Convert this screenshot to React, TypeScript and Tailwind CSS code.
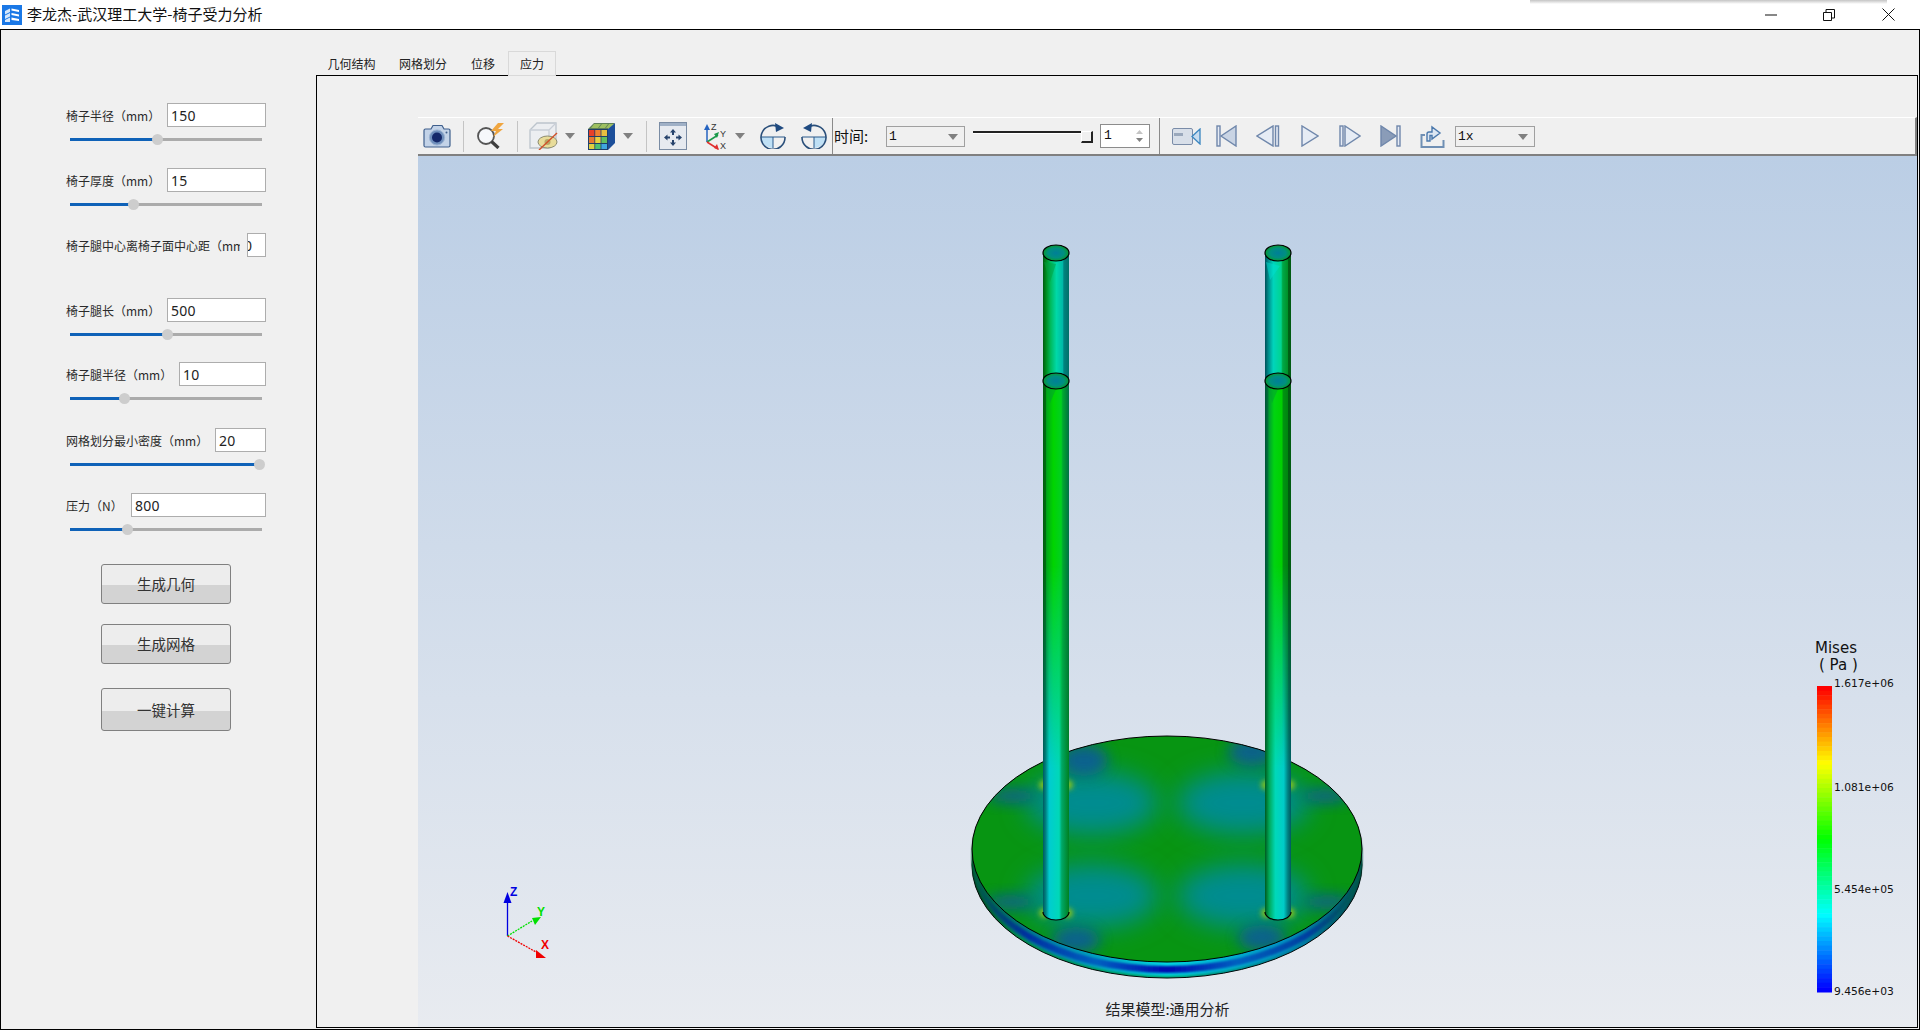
import React from "react";

const fields = [
  { label: "椅子半径（mm）", value: "150", inputW: "w-[99px]", fill: 87, h: "h-[65px]" },
  { label: "椅子厚度（mm）", value: "15", inputW: "w-[99px]", fill: 63, h: "h-[65px]" },
  { label: "椅子腿中心离椅子面中心距（mm）", value: "", inputW: "w-[19px]", fill: -1, h: "h-[65px]" },
  { label: "椅子腿长（mm）", value: "500", inputW: "w-[99px]", fill: 97, h: "h-[64px]" },
  { label: "椅子腿半径（mm）", value: "10", inputW: "w-[87px]", fill: 54, h: "h-[66px]" },
  { label: "网格划分最小密度（mm）", value: "20", inputW: "w-[51px]", fill: 189, h: "h-[65px]" },
  { label: "压力（N）", value: "800", inputW: "w-[135px]", fill: 57, h: "h-[65px]" },
];

const Caret = ({ className = "" }: { className?: string }) => (
  <svg width="10" height="6" viewBox="0 0 10 6" className={`shrink-0 ${className}`}>
    <path d="M0 0H10L5 6Z" fill="#808080" />
  </svg>
);

const Sep = ({ className = "" }: { className?: string }) => (
  <div className={`w-px h-[31px] bg-[#c4c4c4] shrink-0 ${className}`} />
);

const Combo = ({ value, className = "" }: { value: string; className?: string }) => (
  <div className={`h-[21px] mt-[1px] border border-[#a0a0a0] flex items-center justify-between pl-[2px] pr-[6px] shrink-0 font-['Liberation_Mono',monospace] text-[13px] text-[#111] ${className}`}>
    <span>{value}</span>
    <Caret />
  </div>
);

const Field = ({ f }: { f: (typeof fields)[number] }) => (
  <div className={f.h}>
    <div className="flex items-center justify-between h-6">
      <div className="flex-1 min-w-0 overflow-hidden whitespace-nowrap pt-px text-[12px] text-[#2a2a2a] mr-[7px]">{f.label}</div>
      <div className={`${f.inputW} h-6 shrink-0 bg-white border border-[#adadad] pl-[3px] flex items-center overflow-hidden font-['Noto_Sans',sans-serif] text-[14px] tracking-[0.3px] text-[#222]`}>
        {f.value || <span className="-ml-[7px]">0</span>}
      </div>
    </div>
    {f.fill >= 0 && (
      <div className="relative ml-[4px] mt-[11px] w-[192px] h-[3px] bg-[#ababab]">
        <div className="h-full bg-[#0f62b8]" style={{ width: f.fill }} />
        <div className="absolute top-[-4px] w-[11px] h-[11px] rounded-full bg-[#cdcdcd]" style={{ left: f.fill - 5 }} />
      </div>
    )}
  </div>
);

const CameraIcon = () => (
  <svg width="28" height="24" viewBox="0 0 28 24" className="ml-[5px] shrink-0">
    <path d="M1 6.5Q1 5 2.5 5H8L10 1.5H19L21 5H25.5Q27 5 27 6.5V21.5Q27 23 25.5 23H2.5Q1 23 1 21.5Z" fill="#c3d3e8" stroke="#3f5f8c" strokeWidth="1.2" />
    <circle cx="14" cy="13.5" r="7.6" fill="#6f8fbc" stroke="#9db4d3" />
    <circle cx="14" cy="13.5" r="5" fill="#14286a" />
    <circle cx="23.5" cy="8.5" r="1" fill="#3f5f8c" />
  </svg>
);

const SearchBoltIcon = () => (
  <svg width="29" height="26" viewBox="0 0 29 26" className="ml-[12px] shrink-0">
    <circle cx="10" cy="13" r="8" fill="#f6f8fb" stroke="#555" strokeWidth="1.8" />
    <path d="M15.5 18.5L22.5 25" stroke="#3e3e3e" strokeWidth="3.2" />
    <path d="M22 0L15 8H20L17 14L27 6H22L28 0Z" fill="#f0a640" />
  </svg>
);

const HideCubeIcon = () => (
  <svg width="29" height="28" viewBox="0 0 29 28" className="ml-[11px] shrink-0">
    <path d="M1 8L8 1H27V19L20 26H1Z" fill="#eceef1" stroke="#bcc4cc" strokeWidth="1.3" />
    <path d="M1 8H20V26M20 8L27 1" fill="none" stroke="#c8ced6" strokeWidth="1.3" />
    <ellipse cx="18.5" cy="20" rx="9.5" ry="6" fill="#e8dc9a" stroke="#8c8c70" />
    <circle cx="18.5" cy="20" r="3" fill="#b8a868" />
    <path d="M10 28L28 11" stroke="#d0502a" strokeWidth="1.4" />
  </svg>
);

const ColorCubeIcon = () => (
  <svg width="27" height="27" viewBox="0 0 27 27" className="ml-[13px] shrink-0">
    <path d="M0 6L6 0H27L20 6Z" fill="#5f7f58" />
    <path d="M6 1H13L10 5H3ZM14 1H20L17 5H11ZM21 1H26L22 5H18Z" fill="#9ec060" />
    <path d="M20 6L27 0V20L20 27Z" fill="#1d4f9a" />
    <rect x="0" y="6" width="20" height="21" fill="#1f3f6a" />
    <rect x="1" y="7" width="5.4" height="6" fill="#e8402a" />
    <rect x="7.2" y="7" width="5.4" height="6" fill="#f08030" />
    <rect x="13.4" y="7" width="5.6" height="6" fill="#e8c040" />
    <rect x="1" y="14" width="5.4" height="6" fill="#e87830" />
    <rect x="7.2" y="14" width="5.4" height="6" fill="#e8d040" />
    <rect x="13.4" y="14" width="5.6" height="6" fill="#60c060" />
    <rect x="1" y="21" width="5.4" height="5" fill="#e0d040" />
    <rect x="7.2" y="21" width="5.4" height="5" fill="#50c070" />
    <rect x="13.4" y="21" width="5.6" height="5" fill="#40a8e0" />
  </svg>
);

const FitIcon = () => (
  <svg width="28" height="28" viewBox="0 0 28 28" className="ml-[12px] shrink-0">
    <rect x="0.5" y="0.5" width="27" height="27" fill="#e6eaf0" stroke="#7a8ca4" />
    <rect x="1" y="1" width="26" height="3" fill="#9fb0c6" />
    <path d="M14 7L11 10.5H13V13H15V10.5H17ZM14 24L11 20.5H13V18H15V20.5H17ZM5 15.5L8.5 12.5V14.5H11V16.5H8.5V18.5ZM23 15.5L19.5 12.5V14.5H17V16.5H19.5V18.5Z" fill="#26436c" />
  </svg>
);

const AxisIcon = () => (
  <svg width="23" height="29" viewBox="0 0 23 29" className="ml-[17px] shrink-0">
    <path d="M3 20V6" stroke="#2563c0" strokeWidth="1.5" />
    <path d="M3 2L0 8H6Z" fill="#2563c0" />
    <path d="M3 20L14 13" stroke="#1a9a4a" strokeWidth="1.5" />
    <path d="M15 10L10 12L13 16Z" fill="#1a9a4a" />
    <path d="M3 20L14 27" stroke="#e03030" strokeWidth="1.5" />
    <path d="M15 28L10 26L13 22Z" fill="#e03030" />
    <text x="7" y="8" fontSize="9" fontFamily="Liberation Sans" fill="#333">Z</text>
    <text x="16" y="15" fontSize="9" fontFamily="Liberation Sans" fill="#333">Y</text>
    <text x="16" y="27" fontSize="9" fontFamily="Liberation Sans" fill="#333">X</text>
  </svg>
);

const RotateIcon = ({ mirror = false, className = "" }: { mirror?: boolean; className?: string }) => (
  <svg width="26" height="26" viewBox="0 0 26 26" className={`shrink-0 ${mirror ? "-scale-x-100" : ""} ${className}`}>
    <path d="M1 14H13V25A12 12 0 0 1 1 14Z" fill="#bfe0f5" />
    <path d="M1 14H25M13 14V25" stroke="#2a5a8c" strokeWidth="1" />
    <path d="M19 4A12 12 0 1 0 25 14" fill="none" stroke="#2a4f7a" strokeWidth="1.6" />
    <path d="M15 0L24 5L16 9Z" fill="#1f4a80" />
  </svg>
);

const VideoIcon = () => (
  <svg width="29" height="17" viewBox="0 0 29 17" className="ml-[12px] shrink-0">
    <rect x="0.5" y="0.5" width="20" height="16" rx="1.5" fill="#d8dfe9" stroke="#7a8ca8" />
    <rect x="2" y="5" width="9" height="3" fill="#9aa8bc" />
    <path d="M20 8.5L28 1V16Z" fill="#c8dcef" stroke="#3a86c0" strokeWidth="1.3" />
  </svg>
);

const mediaProps = { fill: "#e6ecf5", stroke: "#6f87ab", strokeWidth: 1.4 };

const FirstIcon = () => (
  <svg width="21" height="22" viewBox="0 0 21 22" className="ml-[15px] shrink-0">
    <rect x="1" y="1" width="3" height="20" {...mediaProps} />
    <path d="M20 1V21L5 11Z" {...mediaProps} fill="#c9d4e4" />
  </svg>
);

const PrevIcon = () => (
  <svg width="24" height="22" viewBox="0 0 24 22" className="ml-[19px] shrink-0">
    <path d="M17 1V21L1 11Z" {...mediaProps} />
    <rect x="19.5" y="1" width="3" height="20" {...mediaProps} />
  </svg>
);

const PlayIcon = () => (
  <svg width="18" height="22" viewBox="0 0 18 22" className="ml-[21px] shrink-0">
    <path d="M1 1V21L17 11Z" {...mediaProps} />
  </svg>
);

const NextIcon = () => (
  <svg width="22" height="22" viewBox="0 0 22 22" className="ml-[20px] shrink-0">
    <rect x="1" y="1" width="3" height="20" {...mediaProps} />
    <path d="M6 1V21L21 11Z" {...mediaProps} />
  </svg>
);

const LastIcon = () => (
  <svg width="21" height="22" viewBox="0 0 21 22" className="ml-[19px] shrink-0">
    <path d="M1 1V21L16 11Z" {...mediaProps} fill="#8a9cb8" />
    <rect x="17" y="1" width="3" height="20" {...mediaProps} />
  </svg>
);

const ExportIcon = () => (
  <svg width="25" height="23" viewBox="0 0 25 23" className="ml-[19px] shrink-0">
    <path d="M5 10H1.5V22H23.5V15" fill="none" stroke="#6f8fb4" strokeWidth="2" />
    <path d="M7 16V9Q7 7 9 7H12V2L20 8L12 14V10.5H10V16Z" fill="#dce6f2" stroke="#4a78ac" strokeWidth="1.4" />
  </svg>
);

// bands of the colour bar, red at the top and blue at the bottom
const anchors = [
  [255, 0, 0],
  [255, 255, 0],
  [0, 255, 0],
  [0, 255, 255],
  [0, 0, 255],
];
const bandCount = 66;
const bands = Array.from({ length: bandCount }, (_, i) => {
  const t = (i / (bandCount - 1)) * 4;
  const a = Math.min(Math.floor(t), 3);
  const k = t - a;
  const c = anchors[a].map((v, j) => Math.round(v + (anchors[a + 1][j] - v) * k));
  return `rgb(${c[0]},${c[1]},${c[2]})`;
});

const legLabels = [
  { text: "1.617e+06", y: 687 },
  { text: "1.081e+06", y: 791 },
  { text: "5.454e+05", y: 893 },
  { text: "9.456e+03", y: 995 },
];

const blueSpots = [
  [1084, 760, 24, 16],
  [1252, 752, 24, 14],
  [1012, 796, 24, 7],
  [1326, 796, 24, 7],
  [1010, 902, 24, 7],
  [1328, 902, 24, 7],
  [1076, 940, 24, 13],
  [1262, 938, 24, 13],
];

const tealSpots = [
  [1092, 803],
  [1243, 803],
  [1092, 896],
  [1243, 896],
];

const Leg = ({ x, top, bottom, greenId, cyanId }: { x: number; top: number; bottom: number; greenId: string; cyanId: string }) => (
  <g>
    <rect x={x} y={top} width="26" height={bottom - top} fill={`url(#${greenId})`} />
    <rect x={x} y={top} width="26" height={bottom - top} fill={`url(#${cyanId})`} mask="url(#legFade)" />
    <path d={`M${x} ${bottom}A13 8 0 0 0 ${x + 26} ${bottom}`} fill={`url(#${cyanId})`} stroke="#000" strokeWidth="1.2" />
    <path d={`M${x + 3} ${top + 5}L${x + 14} ${top + 6}L${x + 7} ${top + 22}Z`} fill="#00a030" opacity="0.55" />
    <ellipse cx={x + 13} cy={top} rx="13" ry="8" fill="url(#legCap)" stroke="#000" strokeWidth="1.2" />
  </g>
);

const Model = () => (
  <svg viewBox="418 156 1499 871" className="absolute inset-0 w-full h-full">
    <defs>
      <linearGradient id="greenL">
        <stop offset="0" stopColor="#005c10" />
        <stop offset="0.1" stopColor="#006c10" />
        <stop offset="0.14" stopColor="#00a818" />
        <stop offset="0.4" stopColor="#00d400" />
        <stop offset="0.7" stopColor="#00d020" />
        <stop offset="0.76" stopColor="#00a830" />
        <stop offset="0.9" stopColor="#008838" />
        <stop offset="1" stopColor="#007048" />
      </linearGradient>
      <linearGradient id="greenR">
        <stop offset="0" stopColor="#005038" />
        <stop offset="0.1" stopColor="#007038" />
        <stop offset="0.16" stopColor="#00a030" />
        <stop offset="0.35" stopColor="#00d410" />
        <stop offset="0.65" stopColor="#00d000" />
        <stop offset="0.7" stopColor="#009410" />
        <stop offset="0.88" stopColor="#008410" />
        <stop offset="0.9" stopColor="#005c10" />
        <stop offset="1" stopColor="#005c10" />
      </linearGradient>
      <linearGradient id="cyanL">
        <stop offset="0" stopColor="#005a60" />
        <stop offset="0.1" stopColor="#008080" />
        <stop offset="0.24" stopColor="#00ccd0" />
        <stop offset="0.62" stopColor="#00d8b8" />
        <stop offset="0.72" stopColor="#00a868" />
        <stop offset="1" stopColor="#008020" />
      </linearGradient>
      <linearGradient id="cyanR">
        <stop offset="0" stopColor="#005a20" />
        <stop offset="0.16" stopColor="#00a858" />
        <stop offset="0.4" stopColor="#00d8b8" />
        <stop offset="0.72" stopColor="#00ccc8" />
        <stop offset="0.88" stopColor="#008080" />
        <stop offset="1" stopColor="#005a60" />
      </linearGradient>
      <linearGradient id="backL">
        <stop offset="0" stopColor="#005a10" />
        <stop offset="0.12" stopColor="#008c20" />
        <stop offset="0.28" stopColor="#00b858" />
        <stop offset="0.52" stopColor="#00d8a8" />
        <stop offset="0.76" stopColor="#00b8a8" />
        <stop offset="0.8" stopColor="#008480" />
        <stop offset="1" stopColor="#007068" />
      </linearGradient>
      <linearGradient id="backR">
        <stop offset="0" stopColor="#004f58" />
        <stop offset="0.12" stopColor="#008888" />
        <stop offset="0.32" stopColor="#00d4bc" />
        <stop offset="0.62" stopColor="#00d490" />
        <stop offset="0.68" stopColor="#00a848" />
        <stop offset="0.88" stopColor="#009028" />
        <stop offset="0.9" stopColor="#006018" />
        <stop offset="1" stopColor="#005a10" />
      </linearGradient>
      <linearGradient id="legFadeGrad" x1="0" y1="0" x2="0" y2="1">
        <stop offset="0.34" stopColor="#000" />
        <stop offset="0.72" stopColor="#fff" />
      </linearGradient>
      <mask id="legFade" maskUnits="userSpaceOnUse" x="1000" y="380" width="320" height="540">
        <rect x="1000" y="380" width="320" height="540" fill="url(#legFadeGrad)" />
      </mask>
      <radialGradient id="legCap">
        <stop offset="0" stopColor="#007f98" />
        <stop offset="0.6" stopColor="#008f80" />
        <stop offset="1" stopColor="#089a30" />
      </radialGradient>
      <linearGradient id="sideBase" gradientUnits="userSpaceOnUse" x1="972" x2="1362" y1="0" y2="0">
        <stop offset="0" stopColor="#003c18" />
        <stop offset="0.12" stopColor="#009040" />
        <stop offset="0.5" stopColor="#00a068" />
        <stop offset="0.85" stopColor="#0078a0" />
        <stop offset="1" stopColor="#004038" />
      </linearGradient>
      <linearGradient id="sideCyan" gradientUnits="userSpaceOnUse" x1="972" x2="1362" y1="0" y2="0">
        <stop offset="0" stopColor="#006030" />
        <stop offset="0.2" stopColor="#0080a8" />
        <stop offset="0.5" stopColor="#00d8e0" />
        <stop offset="0.8" stopColor="#0090c0" />
        <stop offset="1" stopColor="#005050" />
      </linearGradient>
      <linearGradient id="sideBlue" gradientUnits="userSpaceOnUse" x1="972" x2="1362" y1="0" y2="0">
        <stop offset="0" stopColor="#006040" />
        <stop offset="0.14" stopColor="#0030a0" />
        <stop offset="0.32" stopColor="#0060c0" />
        <stop offset="0.5" stopColor="#0008b0" />
        <stop offset="0.68" stopColor="#0060c0" />
        <stop offset="0.86" stopColor="#0040a0" />
        <stop offset="1" stopColor="#006040" />
      </linearGradient>
      <clipPath id="topClip">
        <ellipse cx="1167" cy="849" rx="195" ry="113" />
      </clipPath>
      <filter id="blur14" x="-60%" y="-60%" width="220%" height="220%">
        <feGaussianBlur stdDeviation="13" />
      </filter>
      <filter id="blur6" x="-80%" y="-80%" width="260%" height="260%">
        <feGaussianBlur stdDeviation="7" />
      </filter>
      <filter id="blur3" x="-60%" y="-60%" width="220%" height="220%">
        <feGaussianBlur stdDeviation="2.5" />
      </filter>
      <filter id="blur1" x="-5%" y="-5%" width="110%" height="110%">
        <feGaussianBlur stdDeviation="0.8" />
      </filter>
    </defs>

    {/* seat edge */}
    <ellipse cx="1167" cy="865" rx="195" ry="113" fill="url(#sideBase)" stroke="#000" strokeWidth="1" />
    <ellipse cx="1167" cy="863" rx="194" ry="113" fill="url(#sideCyan)" filter="url(#blur1)" />
    <ellipse cx="1167" cy="860" rx="195" ry="113" fill="url(#sideBlue)" filter="url(#blur1)" />
    <ellipse cx="1167" cy="853" rx="195" ry="113" fill="url(#sideCyan)" filter="url(#blur1)" />

    {/* seat top */}
    <ellipse cx="1167" cy="849" rx="195" ry="113" fill="#079512" />
    <g clipPath="url(#topClip)">
      {tealSpots.map(([cx, cy]) => (
        <ellipse key={`${cx}-${cy}`} cx={cx} cy={cy} rx="66" ry="32" fill="#008c90" filter="url(#blur14)" />
      ))}
      {blueSpots.map(([cx, cy, rx, ry]) => (
        <ellipse key={`${cx}-${cy}`} cx={cx} cy={cy} rx={rx} ry={ry} fill="#0a55a8" opacity="0.8" filter="url(#blur6)" />
      ))}
      {[
        [1044, 785],
        [1068, 785],
        [1266, 785],
        [1290, 785],
        [1044, 913],
        [1068, 913],
        [1266, 913],
        [1290, 913],
      ].map(([cx, cy]) => (
        <circle key={`${cx}-${cy}`} cx={cx} cy={cy} r="5" fill="#7fc020" filter="url(#blur3)" />
      ))}
    </g>
    <ellipse cx="1167" cy="849" rx="195" ry="113" fill="none" stroke="#000" strokeWidth="1" />

    {/* legs */}
    <rect x="1043" y="253" width="26" height="135" fill="url(#backL)" />
    <rect x="1265" y="253" width="26" height="135" fill="url(#backR)" />
    <path d="M1044 262L1056 264L1050 282Z" fill="#00a040" opacity="0.5" />
    <path d="M1266 262L1280 266L1270 280Z" fill="#00e0d0" opacity="0.5" />
    <ellipse cx="1056" cy="253" rx="13" ry="8" fill="url(#legCap)" stroke="#000" strokeWidth="1.2" />
    <ellipse cx="1278" cy="253" rx="13" ry="8" fill="url(#legCap)" stroke="#000" strokeWidth="1.2" />
    <Leg x={1043} top={381} bottom={912} greenId="greenL" cyanId="cyanL" />
    <Leg x={1265} top={381} bottom={912} greenId="greenR" cyanId="cyanR" />

    {/* triad */}
    <path d="M507.5 936V900" stroke="#0000e0" strokeWidth="1.3" />
    <path d="M507.5 892L503.5 903H511.5Z" fill="#0000e0" />
    <path d="M507.5 936L532 921" stroke="#00e000" strokeWidth="1.3" strokeDasharray="2 1" />
    <path d="M532 918L541 917L535 925Z" fill="#00e000" />
    <path d="M507.5 936L536 952" stroke="#f00000" strokeWidth="1.3" strokeDasharray="2 1" />
    <path d="M536 950L546 958H536Z" fill="#f00000" />
    <text x="510" y="896" fontSize="12" fontWeight="bold" fontFamily="Liberation Sans" fill="#0000e0">Z</text>
    <text x="537" y="916" fontSize="12" fontWeight="bold" fontFamily="Liberation Sans" fill="#00e000">Y</text>
    <text x="541" y="949" fontSize="12" fontWeight="bold" fontFamily="Liberation Sans" fill="#f00000">X</text>

    {/* colour bar */}
    {bands.map((c, i) => (
      <rect key={i} x="1817" y={686 + (i * 306) / bandCount} width="15" height={306 / bandCount + 0.5} fill={c} />
    ))}
    <text x="1815" y="653" fontSize="15" fontFamily="DejaVu Sans" fill="#111">Mises</text>
    <text x="1819" y="670" fontSize="15" fontFamily="DejaVu Sans" fill="#111" xmlSpace="preserve">( Pa )</text>
    {legLabels.map((l) => (
      <text key={l.text} x="1834" y={l.y} fontSize="10.7" fontFamily="DejaVu Sans" fill="#111">{l.text}</text>
    ))}
  </svg>
);

export default function App() {
  return (
    <div className="relative w-[1920px] h-[1030px] overflow-hidden flex flex-col bg-white font-['Noto_Sans_CJK_SC',sans-serif]">
      {/* Title bar */}
      <div className="h-[29px] shrink-0 flex items-center">
        <svg width="20" height="20" viewBox="0 0 20 20" className="ml-[2px] shrink-0">
          <rect width="20" height="20" fill="#1a78e6" />
          <path d="M3 6L8 3.5V7L3 9.5ZM3 10.5L8 8V11.5L3 14ZM3 15L8 12.5V17L3 17Z" fill="#d7e8fb" />
          <path d="M9.5 3.5L17 5V7L9.5 5.5ZM9.5 8L17 9.5V11.5L9.5 10ZM9.5 12.5L17 14V16L9.5 15Z" fill="#fff" />
        </svg>
        <span className="ml-[5px] text-[15px] text-[#111] whitespace-nowrap">李龙杰-武汉理工大学-椅子受力分析</span>
        <svg width="12" height="2" viewBox="0 0 12 2" className="ml-auto shrink-0">
          <rect width="12" height="1" y="0.5" fill="#111" />
        </svg>
        <svg width="12" height="12" viewBox="0 0 12 12" className="ml-[46px] shrink-0">
          <path d="M0.5 3.5H8.5V11.5H0.5ZM3 3.5V0.5H11.5V9H8.5" fill="none" stroke="#111" />
        </svg>
        <svg width="13" height="13" viewBox="0 0 13 13" className="ml-[47px] mr-[25px] shrink-0">
          <path d="M0.5 0.5L12.5 12.5M12.5 0.5L0.5 12.5" stroke="#111" />
        </svg>
      </div>
      <div className="absolute top-0 left-[1530px] w-[357px] h-[4px] bg-gradient-to-b from-[#c4c4c4] to-white" />

      <div className="flex-1 min-h-0 flex border border-black bg-[#f0f0f0]">
        {/* Parameter panel */}
        <div className="w-[315px] shrink-0 pt-[73px] pl-[65px]">
          <div className="w-[200px]">
            {fields.map((f) => (
              <Field key={f.label} f={f} />
            ))}
          </div>
          <div className="ml-[35px] mt-[6px] flex flex-col w-[130px]">
            <button className="h-10 rounded-[3px] border border-[#808080] text-[14.5px] text-[#333] bg-[linear-gradient(#ededed_0,#ededed_20px,#d3d3d3_20px)]">生成几何</button>
            <button className="h-10 mt-5 rounded-[3px] border border-[#808080] text-[14.5px] text-[#333] bg-[linear-gradient(#ededed_0,#ededed_20px,#d3d3d3_20px)]">生成网格</button>
            <button className="h-[43px] mt-6 rounded-[3px] border border-[#808080] text-[14.5px] text-[#333] bg-[linear-gradient(#ededed_0,#ededed_22px,#d3d3d3_22px)]">一键计算</button>
          </div>
        </div>

        {/* Result tabs */}
        <div className="flex-1 min-w-0 flex flex-col pr-px pb-px">
          <div className="h-[45px] shrink-0 flex items-end text-[12px] text-[#222] relative z-10">
            <div className="h-6 w-[71px] pt-[2px] flex items-center justify-center">几何结构</div>
            <div className="h-6 w-[72px] pt-[2px] flex items-center justify-center">网格划分</div>
            <div className="h-6 w-[48px] pt-[2px] flex items-center justify-center">位移</div>
            <div className="h-[25px] w-[48px] ml-px -mb-px border border-[#d9d9d9] bg-[#f0f0f0] flex items-center justify-center">应力</div>
          </div>
          <div className="flex-1 min-h-0 border border-black pl-[101px] pt-[41px] flex flex-col">
            {/* Toolbar */}
            <div className="h-[39px] shrink-0 flex items-center border-t border-white border-r-2 border-r-[#808080] border-b-2 border-b-[#808080]">
              <CameraIcon />
              <Sep className="ml-[12px]" />
              <SearchBoltIcon />
              <Sep className="ml-[12px]" />
              <HideCubeIcon />
              <Caret className="ml-[7px]" />
              <ColorCubeIcon />
              <Caret className="ml-[8px]" />
              <Sep className="ml-[13px]" />
              <FitIcon />
              <AxisIcon />
              <Caret className="ml-[8px]" />
              <RotateIcon className="ml-[15px]" />
              <RotateIcon mirror className="ml-[15px]" />
              <div className="ml-[5px] w-px self-stretch bg-[#8a8a8a] shrink-0" />
              <span className="ml-px w-[36px] shrink-0 text-[15px] text-[#111] whitespace-nowrap">时间:</span>
              <Combo value="1" className="ml-[16px] w-[79px]" />
              {/* time slider: line plus corner handle */}
              <div className="ml-[8px] w-[120px] h-[14px] mt-[4px] shrink-0 flex">
                <div className="w-[108px] h-[2px] bg-[#222] shadow-[0_1px_0_#fff]" />
                <div className="w-[12px] h-[12px] border-t border-l border-white border-r-2 border-r-[#222] border-b-2 border-b-[#222]" />
              </div>
              <div className="relative ml-[7px] w-[50px] h-6 shrink-0 bg-white border border-[#8c8c8c] pl-[3px] flex items-center font-['Liberation_Mono',monospace] text-[13px] text-[#111]">
                1
                <svg width="7" height="12" viewBox="0 0 7 12" className="absolute right-[6px] top-[5px]">
                  <path d="M3.5 0L7 4H0Z" fill="#c4c4c4" />
                  <path d="M3.5 12L7 8H0Z" fill="#808080" />
                </svg>
              </div>
              <div className="ml-[9px] w-px self-stretch bg-[#8a8a8a] shrink-0" />
              <VideoIcon />
              <FirstIcon />
              <PrevIcon />
              <PlayIcon />
              <NextIcon />
              <LastIcon />
              <ExportIcon />
              <Combo value="1x" className="ml-[10px] w-[80px]" />
            </div>

            {/* 3D view */}
            <div className="relative flex-1 min-h-0 bg-gradient-to-b from-[#bbcee5] to-[#e8ebf0]">
              <Model />
              <div className="absolute bottom-[7px] inset-x-0 text-center text-[15px] text-[#222]">结果模型:通用分析</div>
            </div>
          </div>
        </div>
      </div>
    </div>
  );
}
